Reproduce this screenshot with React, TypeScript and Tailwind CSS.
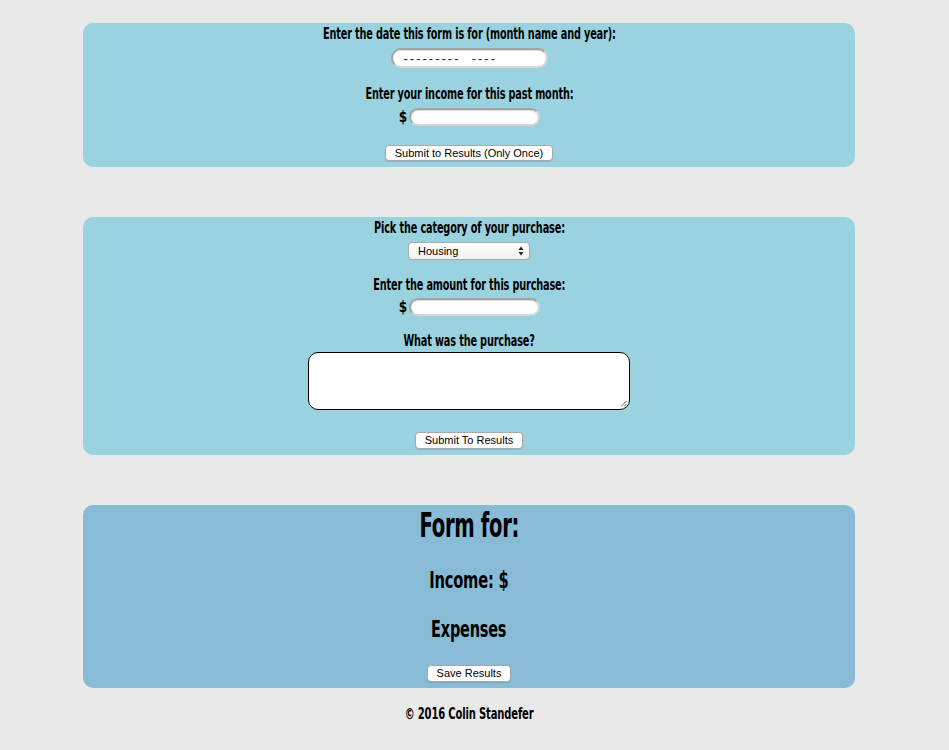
import React from 'react'

const heading = { fontFamily: '"Liberation Sans Narrow", "DejaVu Sans Condensed", "Liberation Sans", sans-serif' }
const ui = { fontFamily: '"Liberation Sans", Arial, sans-serif' }

// condensed label line (DejaVu Condensed squeezed to an Oswald-like width)
function Label({ children, className = '' }: { children: React.ReactNode; className?: string }) {
  return (
    <div className={`h-[22px] leading-[22px] text-[15px] font-bold tracking-[-0.2px] whitespace-nowrap scale-x-[0.72] ${className}`}>
      {children}
    </div>
  )
}

function Pill({ className = '', children }: { className?: string; children?: React.ReactNode }) {
  return (
    <div
      className={`bg-white border-2 border-[#a3a3a3] border-b-[#d6d6d6] border-r-[#d6d6d6] rounded-[10px] shadow-[inset_0_1px_1px_rgba(0,0,0,0.15)] ${className}`}
    >
      {children}
    </div>
  )
}

function Btn({ label, className = '' }: { label: string; className?: string }) {
  return (
    <button
      style={ui}
      className={`bg-white border border-[#a9a9a9] rounded-[4px] text-[11px] leading-none text-black px-[9px] shadow-[0_1px_1px_rgba(0,0,0,0.12)] ${className}`}
    >
      {label}
    </button>
  )
}

function Money({ className = '' }: { className?: string }) {
  return (
    <div className={`h-[18px] flex items-center justify-center ${className}`}>
      <span className="text-[16px] font-bold mr-[1px] leading-none scale-x-[0.85]" style={heading}>$</span>
      <Pill className="w-[131px] h-[18px]" />
    </div>
  )
}

export default function App() {
  return (
    <div className="min-h-[750px] bg-[#e9e9e9] text-black" style={heading}>
      <div className="w-[938px] flex flex-col items-center">
        {/* Month + income */}
        <div className="mt-[23px] w-[772px] bg-[#9ad2df] rounded-[10px] flex flex-col items-center pb-[6px]">
          <Label>Enter the date this form is for (month name and year):</Label>
          <Pill className="mt-[3px] w-[157px] h-[20px] flex items-center pl-[11px]">
            <span style={ui} className="text-[13px] leading-none tracking-[2px] text-[#222]">---------&nbsp;&nbsp;----</span>
          </Pill>
          <Label className="mt-[15px]">Enter your income for this past month:</Label>
          <Money className="mt-[3px]" />
          <Btn label="Submit to Results (Only Once)" className="mt-[19px] h-[16px]" />
        </div>

        {/* Purchase */}
        <div className="mt-[50px] w-[772px] bg-[#9ad2df] rounded-[10px] flex flex-col items-center pb-[6px]">
          <Label>Pick the category of your purchase:</Label>
          <div
            style={ui}
            className="mt-[3px] w-[122px] h-[18px] bg-gradient-to-b from-white to-[#f1f1f1] border border-[#a9a9a9] rounded-[4px] flex items-center justify-between pl-[9px] pr-[5px] text-[11px]"
          >
            <span>Housing</span>
            <svg width="6" height="10" viewBox="0 0 6 10">
              <path d="M3 0.5 L5.5 4 H0.5 Z" fill="#222" />
              <path d="M3 9.5 L5.5 6 H0.5 Z" fill="#222" />
            </svg>
          </div>
          <Label className="mt-[14px]">Enter the amount for this purchase:</Label>
          <Money className="mt-[2px]" />
          <Label className="mt-[14px] h-[20px] leading-[20px]">What was the purchase?</Label>
          <div className="relative w-[322px] h-[58px] bg-white border border-black rounded-[10px]">
            <svg className="absolute right-[2px] bottom-[2px]" width="7" height="7" viewBox="0 0 7 7">
              <path d="M6.5 1 L1 6.5 M6.5 4 L4 6.5" stroke="#666" strokeWidth="1" />
            </svg>
          </div>
          <Btn label="Submit To Results" className="mt-[22px] h-[17px]" />
        </div>

        {/* Results */}
        <div className="mt-[50px] w-[772px] h-[183px] bg-[#88bbd6] rounded-[10px] flex flex-col items-center">
          <div className="mt-[1px] h-[40px] leading-[40px] text-[33px] font-bold tracking-[-0.5px] whitespace-nowrap scale-x-[0.66]">Form for:</div>
          <div className="mt-[19px] h-[30px] leading-[30px] text-[23px] font-bold tracking-[-0.3px] whitespace-nowrap scale-x-[0.71]">Income: $</div>
          <div className="mt-[19px] h-[30px] leading-[30px] text-[23px] font-bold tracking-[-0.3px] whitespace-nowrap scale-x-[0.7]">Expenses</div>
          <Btn label="Save Results" className="mt-[21px] h-[17px]" />
        </div>

        <div className="mt-[15px] h-[22px] leading-[22px] text-[15px] font-bold tracking-[-0.2px] whitespace-nowrap scale-x-[0.74]">© 2016 Colin Standefer</div>
      </div>
    </div>
  )
}
